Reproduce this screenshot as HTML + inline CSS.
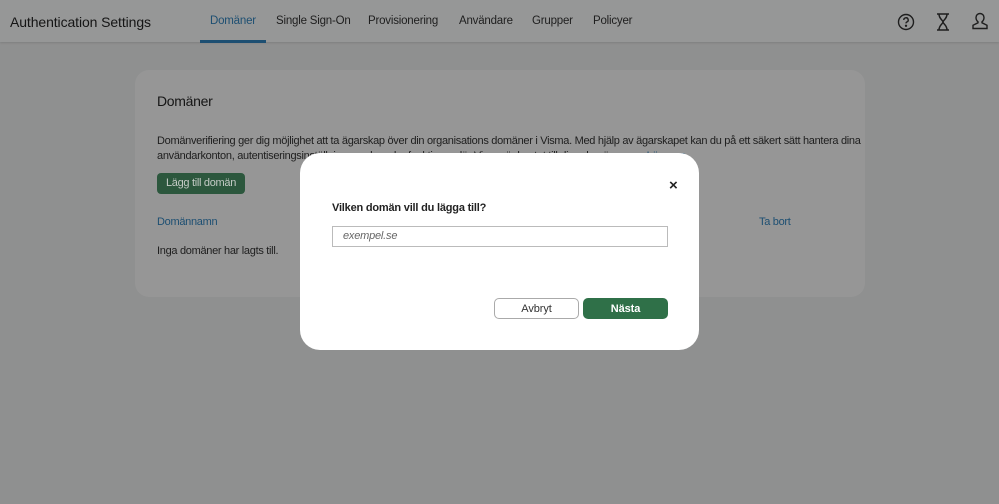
<!DOCTYPE html>
<html><head><meta charset="utf-8"><style>
*{box-sizing:border-box;margin:0;padding:0}
body{width:999px;height:504px;overflow:hidden;background:#8f9090;font-family:"Liberation Sans",sans-serif;position:relative;color:#151515}
.hdr{position:absolute;left:0;top:0;width:999px;height:42px;background:#969797;box-shadow:0 1px 2px rgba(0,0,0,.12)}
.brand{position:absolute;left:10px;top:14px;font-size:14px;color:#151515;letter-spacing:-.1px}
.nav{position:absolute;top:15px;font-size:11.5px;color:#1e1e1e;letter-spacing:-.2px}
.act{color:#1d4f72}
.ul{position:absolute;left:200px;top:40px;width:66px;height:3px;background:#1d4f72}
.card{position:absolute;left:135px;top:70px;width:730px;height:227px;background:#969696;border-radius:14px}
.t{position:absolute;font-size:11px;color:#1e1e1e;letter-spacing:-.3px}
.btn{position:absolute;left:157px;top:173px;width:88px;height:21px;background:#2c573d;color:#c5cbc6;border-radius:4px;font-size:11px;text-align:center;line-height:21px;letter-spacing:-.3px}
.modal{position:absolute;left:300px;top:153px;width:399px;height:197px;background:#fff;border-radius:20px}
.b{position:absolute;top:145px;width:85px;height:21px;border-radius:5px;font-size:11px;display:flex;align-items:center;justify-content:center;letter-spacing:-.1px}
</style></head><body>
<div class="hdr">
<div class="brand">Authentication Settings</div>
<div class="nav act" style="left:210px">Domäner</div>
<div class="nav" style="left:276px">Single Sign-On</div>
<div class="nav" style="left:368px">Provisionering</div>
<div class="nav" style="left:459px">Användare</div>
<div class="nav" style="left:532px">Grupper</div>
<div class="nav" style="left:593px">Policyer</div>
<div class="ul"></div>
<svg style="position:absolute;left:896px;top:12px" width="20" height="20" viewBox="0 0 20 20" fill="none" stroke="#1e1e1e" stroke-width="1.4"><circle cx="10" cy="10" r="7.5"/><path d="M7.8 8a2.2 2.2 0 1 1 3 2c-.6.3-.8.7-.8 1.4"/><circle cx="10" cy="13.8" r=".5" fill="#1e1e1e"/></svg>
<svg style="position:absolute;left:934px;top:12px" width="18" height="20" viewBox="0 0 18 20" fill="none" stroke="#1e1e1e" stroke-width="1.5"><path d="M3 2h12M3 18h12M5 2c0 5 4 6 4 8s-4 3-4 8M13 2c0 5-4 6-4 8s4 3 4 8"/></svg>
<svg style="position:absolute;left:971px;top:11px" width="18" height="20" viewBox="0 0 18 20" fill="none" stroke="#1e1e1e" stroke-width="1.4"><path d="M9 2.5a4 4 0 0 1 4 4c0 2-1 3.5-2 4.3v1l5 2.5v3.2H2v-3.2l5-2.5v-1c-1-.8-2-2.3-2-4.3a4 4 0 0 1 4-4z"/></svg>
</div>
<div class="card">
<div class="t" style="left:22px;top:23px;font-size:14px;color:#151515">Domäner</div>
<div class="t" style="left:22px;top:64px;line-height:15px;width:705px">Domänverifiering ger dig möjlighet att ta ägarskap över din organisations domäner i Visma. Med hjälp av ägarskapet kan du på ett säkert sätt hantera dina användarkonton, autentiseringsinställningar och andra funktioner där Visma är knutet till dina domännamn. <span style="color:#1d4f72">Läs mer</span></div>
<div class="t" style="left:22px;top:146px;color:#1d4f72">Domännamn</div>
<div class="t" style="left:624px;top:146px;color:#1d4f72">Ta bort</div>
<div class="t" style="left:22px;top:175px">Inga domäner har lagts till.</div>
</div>
<div class="btn">Lägg till domän</div>
<div class="modal">
<div style="position:absolute;left:369px;top:24px;font-size:15px;font-weight:bold;color:#222">×</div>
<div style="position:absolute;left:32px;top:49px;font-size:11px;font-weight:bold;color:#222;letter-spacing:-.2px">Vilken domän vill du lägga till?</div>
<div style="position:absolute;left:32px;top:73px;width:336px;height:21px;border:1px solid #bbb;font-size:11px;font-style:italic;color:#666;padding-left:10px;line-height:19px;letter-spacing:-.2px">exempel.se</div>
<div class="b" style="left:194px;border:1px solid #aaa;color:#333">Avbryt</div>
<div class="b" style="left:283px;background:#2f7048;color:#fff;font-weight:bold">Nästa</div>
</div>
</body></html>
